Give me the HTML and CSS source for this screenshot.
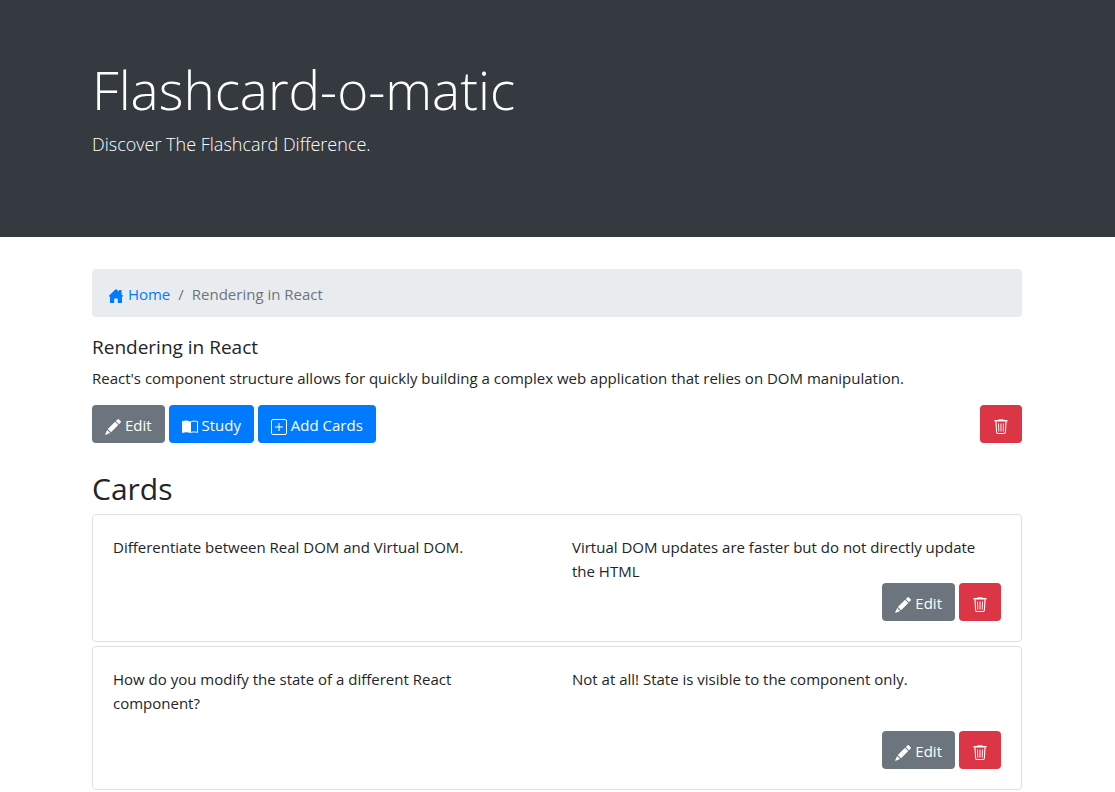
FILE: index.html
```html
<!DOCTYPE html>
<html lang="en">
<head>
<meta charset="utf-8">
<meta name="viewport" content="width=device-width, initial-scale=1">
<title>Flashcard-o-matic</title>
<link rel="stylesheet" href="styles.css">
</head>
<body>
<svg class="sprite" aria-hidden="true">
  <symbol id="pencil" viewBox="0 0 16 16">
    <path d="M12.500 0.400a1 1 0 0 1 1.400 0l1.800 1.800a1 1 0 0 1 0 1.400L14 5.300 10.800 2.100zM10.100 2.800l3.200 3.200-7.300 7.300-3.200-3.200zM2.200 10.900l3 3-4.400 1.900a.5.5 0 0 1-.6-.6z"/>
  </symbol>
  <symbol id="trash" viewBox="0 0 16 16">
    <path d="M6 .3h4a.7.7 0 0 1 .7.700H14a.6.600 0 0 1 .6.600v.9H1.400v-.9A.6.600 0 0 1 2 1h3.300A.7.700 0 0 1 6 .3z"/>
    <path fill="none" stroke="currentColor" stroke-width="1.1" d="M3 2.500l.6 10.800a1.300 1.300 0 0 0 1.300 1.200h6.200a1.300 1.300 0 0 0 1.300-1.200L13 2.500"/>
    <path fill="none" stroke="currentColor" stroke-width=".9" d="M5.500 4.500l.3 8M8 4.500v8M10.500 4.500l-.3 8"/>
  </symbol>
  <symbol id="book" viewBox="0 0 16 16">
    <path d="M0 2.300C2.500 1.300 6 1.200 8 2.500V14C6 13 2.500 13.200 0 14z"/>
    <path fill="none" stroke="currentColor" d="M8.500 2.800C10.500 1.900 13.500 1.900 15.500 2.600V13.400C13.300 12.800 10.500 12.800 8.500 13.400z"/>
  </symbol>
  <symbol id="plus" viewBox="0 0 16 16">
    <rect x=".5" y=".5" width="15" height="15" rx="1.5" fill="none" stroke="currentColor"/>
    <path d="M7.500 4h1v3.500H12v1H8.500V12h-1V8.500H4v-1h3.500z"/>
  </symbol>
  <symbol id="house" viewBox="0 0 16 16">
    <path d="M7.300 1.500a1 1 0 0 1 1.400 0L11 3.800V2h2.500v4.300l1.800 1.800-.7.700L14 8.200V14.500a.5.5 0 0 1-.5.5H9.800V11a.5.500 0 0 0-.5-.5H6.700a.5.500 0 0 0-.5.500v4H2.500a.5.5 0 0 1-.5-.5V8.200l-.6.600-.7-.7z"/>
  </symbol>
</svg>

<header class="hero">
  <div class="container">
    <h1 class="hero-title">Flashcard-o-matic</h1>
    <p class="hero-lead">Discover The Flashcard Difference.</p>
  </div>
</header>

<main class="container">
  <nav aria-label="breadcrumb">
    <ol class="breadcrumb">
      <li><a href="#"><svg class="icon"><use href="#house"/></svg> Home</a></li>
      <li class="current" aria-current="page">Rendering in React</li>
    </ol>
  </nav>

  <section class="deck">
    <h2 class="deck-title">Rendering in React</h2>
    <p class="deck-text">React's component structure allows for quickly building a complex web application that relies on DOM manipulation.</p>
    <div class="actions">
      <button type="button" class="btn gray"><svg class="icon"><use href="#pencil"/></svg> Edit</button>
      <button type="button" class="btn blue"><svg class="icon"><use href="#book"/></svg> Study</button>
      <button type="button" class="btn blue"><svg class="icon"><use href="#plus"/></svg> Add Cards</button>
      <button type="button" class="btn red last" aria-label="Delete deck"><svg class="icon"><use href="#trash"/></svg></button>
    </div>
  </section>

  <section>
    <h2 class="cards-title">Cards</h2>
    <div class="cards">
      <article class="card">
        <div class="sides">
          <p class="front">Differentiate between Real DOM and Virtual DOM.</p>
          <p>Virtual DOM updates are faster but do not directly update the HTML</p>
        </div>
        <div class="actions end">
          <button type="button" class="btn gray"><svg class="icon"><use href="#pencil"/></svg> Edit</button>
          <button type="button" class="btn red" aria-label="Delete card"><svg class="icon"><use href="#trash"/></svg></button>
        </div>
      </article>
      <article class="card">
        <div class="sides">
          <p class="front">How do you modify the state of a different React component?</p>
          <p>Not at all! State is visible to the component only.</p>
        </div>
        <div class="actions end">
          <button type="button" class="btn gray"><svg class="icon"><use href="#pencil"/></svg> Edit</button>
          <button type="button" class="btn red" aria-label="Delete card"><svg class="icon"><use href="#trash"/></svg></button>
        </div>
      </article>
    </div>
  </section>
</main>
</body>
</html>
```
FILE: styles.css
```css
* { box-sizing: border-box; }

body {
  margin: 0;
  background: #fff;
  color: #212529;
  font: 400 15px/24px "Segoe UI", "Open Sans", "Noto Sans", sans-serif;
}

h1, h2, p, ol { margin: 0; padding: 0; }

.sprite { display: none; }

.container {
  width: 100%;
  max-width: 961px;
  margin: 0 auto;
  padding: 0 16px 0 15px;
}

.hero {
  margin-bottom: 32px;
  padding: 56px 0 78px;
  background: #343a40;
  color: #fff;
}

.hero-title {
  margin-bottom: 6px;
  font-size: 53px;
  font-weight: 300;
  line-height: 67px;
}

.hero-lead {
  font-size: 18px;
  font-weight: 300;
  line-height: 30px;
}

.icon {
  width: 16px;
  height: 16px;
  fill: currentColor;
  vertical-align: -4px;
}

.breadcrumb {
  display: flex;
  margin-bottom: 16px;
  padding: 13px 16px 11px;
  border-radius: 4px;
  background: #e9ecef;
  list-style: none;
}

.breadcrumb a { color: #007bff; text-decoration: none; }

.current { color: #6c757d; }
.current::before { content: "/"; padding: 0 8px; }

.deck { margin-bottom: 26px; }

.deck-title {
  margin-bottom: 5px;
  font-size: 19px;
  font-weight: 400;
  line-height: 28px;
}

.deck-text { margin-bottom: 15px; }

.actions { display: flex; gap: 4px; }
.end { justify-content: flex-end; }
.last { margin-left: auto; }

.btn {
  height: 38px;
  padding: 2px 13px 0;
  border: 0;
  border-radius: 4px;
  color: #fff;
  font: inherit;
  cursor: pointer;
}

.gray { background: #6c757d; }
.blue { background: #007bff; }
.red { background: #dc3545; }

.cards-title {
  margin-bottom: 6px;
  font-size: 30px;
  font-weight: 400;
  line-height: 39px;
}

.cards { display: grid; gap: 4px; }

.card {
  padding: 20px;
  border: 1px solid #dfdfdf;
  border-radius: 4px;
}

.sides {
  display: grid;
  grid-template-columns: 1fr 1fr;
  column-gap: 30px;
}

.front { margin-bottom: 16px; }
.card:first-child .front { margin-bottom: 0; }
```
